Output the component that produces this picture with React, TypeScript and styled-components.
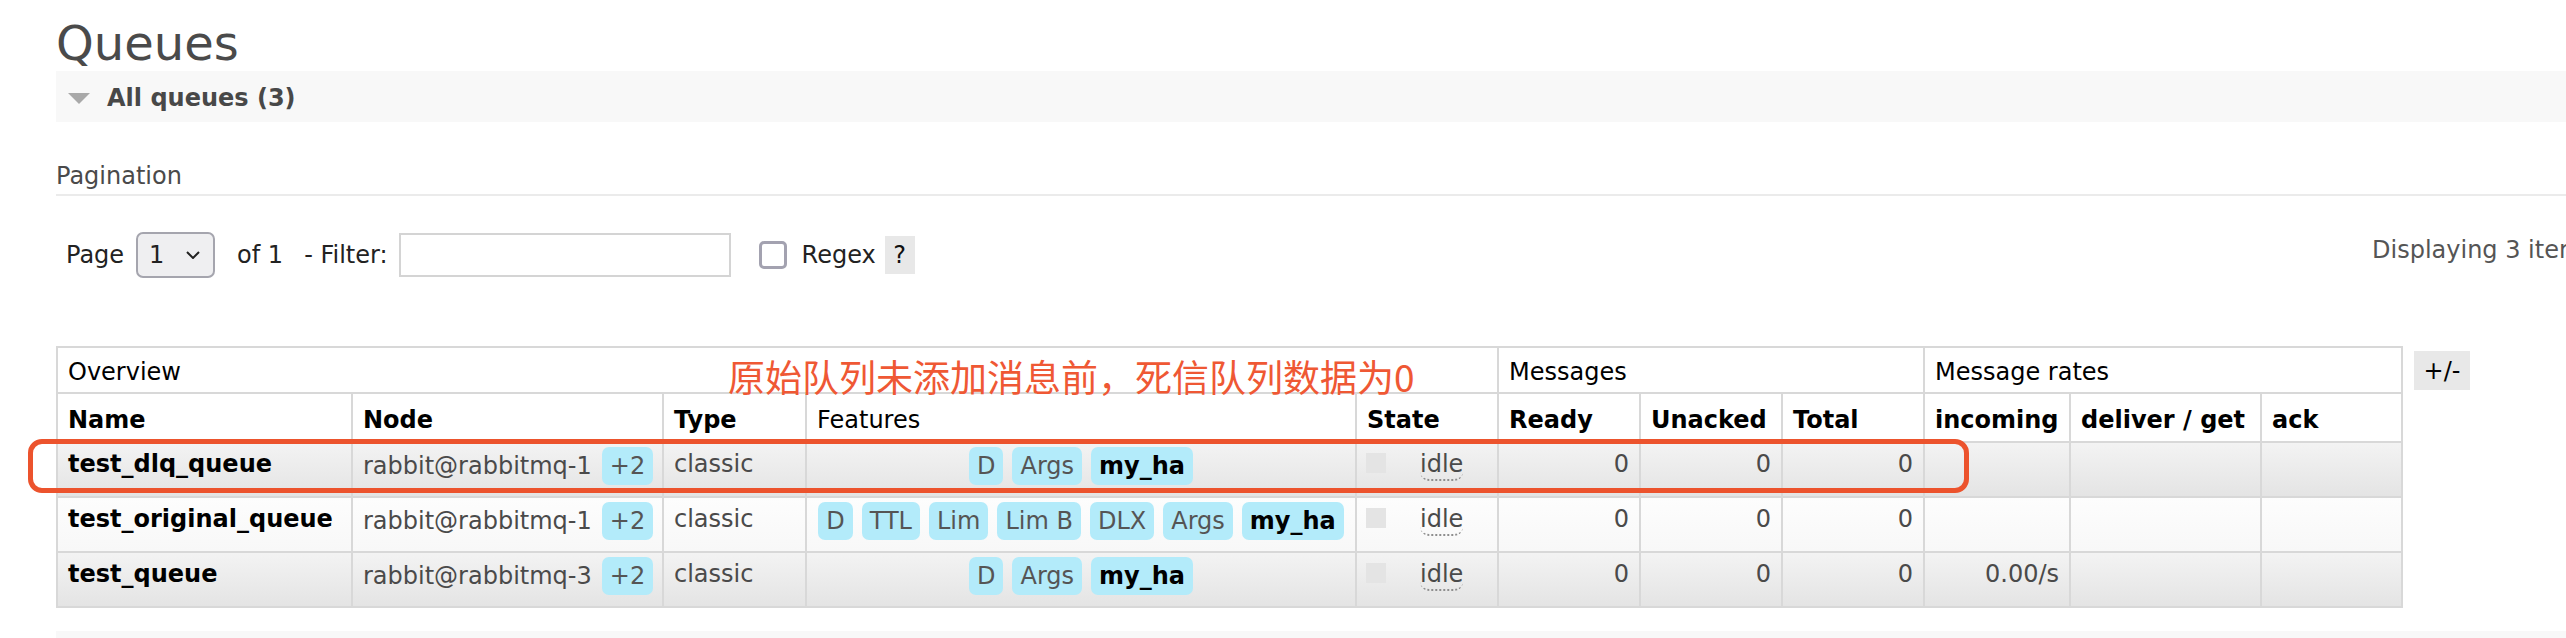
import React from "react";
import styled, { createGlobalStyle } from "styled-components";

const GlobalStyle = createGlobalStyle`
  html, body {
    margin: 0;
    padding: 0;
    background: #fff;
    overflow: hidden;
  }
  body {
    font-family: "DejaVu Sans", Verdana, sans-serif;
    font-size: 24px;
    color: #484848;
  }
`;

const PageWrap = styled.div`
  width: 2566px;
  box-sizing: border-box;
  padding: 15px 0 0 56px;
`;

const Title = styled.h1`
  margin: 0;
  font-size: 48px;
  font-weight: normal;
  color: #4a4a4a;
`;

const SectionBar = styled.div`
  display: flex;
  align-items: center;
  gap: 17px;
  padding: 13px 12px 10px;
  background: #f8f8f8;
  font-weight: bold;
  color: #484848;
`;

const SubHeading = styled.h3`
  margin: 40px 0 0;
  padding-bottom: 4px;
  border-bottom: 2px solid #ebebeb;
  font-size: 24px;
  font-weight: normal;
  color: #4a4a4a;
`;

const PagerRow = styled.div`
  display: flex;
  align-items: flex-start;
  margin-top: 36px;
  padding-left: 10px;
  white-space: nowrap;
`;

const PagerControls = styled.div`
  flex: 0 0 2306px;
  display: flex;
  align-items: center;
  color: #222;
`;

const Label = styled.span<{ $gap?: number }>`
  margin-left: ${(p) => p.$gap ?? 0}px;
`;

const PageSelect = styled.div`
  display: flex;
  align-items: center;
  justify-content: space-between;
  box-sizing: border-box;
  width: 79px;
  height: 46px;
  margin-left: 12px;
  padding: 0 13px 0 11px;
  border: 2px solid #a5a5ae;
  border-radius: 7px;
  background: #efeff1;
  color: #222;
`;

const FilterInput = styled.input`
  box-sizing: border-box;
  width: 332px;
  height: 44px;
  margin-left: 11px;
  border: 2px solid #d4d4d4;
  background: #fff;
  font: inherit;
  outline: none;
`;

const CheckBox = styled.span`
  box-sizing: border-box;
  width: 28px;
  height: 28px;
  margin-left: 28px;
  border: 3px solid #a3a2b0;
  border-radius: 5px;
  background: #fff;
`;

const HelpTag = styled.span`
  display: flex;
  align-items: center;
  justify-content: center;
  width: 30px;
  height: 38px;
  margin-left: 9px;
  background: #e8e8e8;
  color: #111;
`;

const Displaying = styled.span`
  flex-shrink: 0;
  margin-top: 4px;
  color: #555;
`;

const TableArea = styled.div`
  position: relative;
  display: flex;
  align-items: flex-start;
  gap: 11px;
  margin-top: 68px;
`;

const QueueTable = styled.table`
  border-collapse: separate;
  border-spacing: 0;
  table-layout: fixed;
  width: 2347px;
  border-left: 2px solid #d8d8d8;
  border-top: 2px solid #d8d8d8;
`;

const Row = styled.tr<{ $h: number }>`
  height: ${(p) => p.$h}px;
`;

const HeadCell = styled.th<{ $bold?: boolean }>`
  box-sizing: border-box;
  padding: 4px 10px 0;
  border-right: 2px solid #d8d8d8;
  border-bottom: 2px solid #d8d8d8;
  background: #fff;
  color: #000;
  text-align: left;
  vertical-align: middle;
  white-space: nowrap;
  font-weight: ${(p) => (p.$bold ? "bold" : "normal")};
`;

const Cell = styled.td<{ $alt: boolean; $align?: "left" | "right"; $padLeft?: number }>`
  box-sizing: border-box;
  padding: 4px 10px 0 ${(p) => p.$padLeft ?? 10}px;
  border-right: 2px solid #d8d8d8;
  border-bottom: 2px solid #d8d8d8;
  vertical-align: top;
  line-height: 34px;
  white-space: nowrap;
  text-align: ${(p) => p.$align ?? "left"};
  color: #4a4a4a;
  background: ${(p) =>
    p.$alt
      ? "linear-gradient(#f3f3f3, #e4e4e4)"
      : "linear-gradient(#fdfdfd, #f8f8f8)"};
`;

const QueueName = styled.span`
  font-weight: bold;
  color: #000;
`;

const InlineGroup = styled.div<{ $center?: boolean }>`
  display: flex;
  align-items: center;
  justify-content: ${(p) => (p.$center ? "center" : "flex-start")};
  gap: 9px;
`;

const Tag = styled.span<{ $strong?: boolean }>`
  display: inline-block;
  height: 38px;
  line-height: 38px;
  padding: 0 8px;
  border-radius: 7px;
  background: #b3ebfa;
  color: ${(p) => (p.$strong ? "#000" : "#555")};
  font-weight: ${(p) => (p.$strong ? "bold" : "normal")};
`;

const NodeTag = styled(Tag)`
  margin-left: 1px;
`;

const StateBox = styled.div`
  display: flex;
  align-items: flex-start;
  gap: 34px;
`;

const StatusSquare = styled.span`
  width: 20px;
  height: 20px;
  margin-top: 6px;
  background: #e4e4e4;
`;

const Idle = styled.span`
  display: inline-block;
  line-height: 30px;
  margin-top: 2px;
  border-bottom: 2px dotted #8e8e8e;
  border-radius: 0 0 9px 9px;
  color: #4a4a4a;
`;

const ColumnToggle = styled.div`
  display: flex;
  align-items: center;
  justify-content: center;
  width: 56px;
  height: 39px;
  margin-top: 5px;
  background: #e8e8e8;
  color: #000;
`;

const Annotation = styled.div`
  position: absolute;
  left: 672px;
  top: 12px;
  font-family: "Noto Sans CJK SC", "DejaVu Sans", sans-serif;
  font-size: 37px;
  line-height: 1;
  color: #ef5834;
  white-space: nowrap;
`;

const Highlight = styled.div`
  position: absolute;
  left: -28px;
  top: 93px;
  width: 1941px;
  height: 54px;
  box-sizing: border-box;
  border: 5px solid #ec532d;
  border-radius: 14px;
  pointer-events: none;
`;

const BottomBar = styled.div`
  height: 40px;
  margin-top: 23px;
  background: #f8f8f8;
`;

type Feature = { label: string; strong?: boolean };
type Queue = { name: string; node: string; features: Feature[]; incoming: string };

const f = (labels: string[]): Feature[] =>
  labels.map((label) => ({ label, strong: label === "my_ha" }));

const queues: Queue[] = [
  { name: "test_dlq_queue", node: "rabbit@rabbitmq-1", features: f(["D", "Args", "my_ha"]), incoming: "" },
  {
    name: "test_original_queue",
    node: "rabbit@rabbitmq-1",
    features: f(["D", "TTL", "Lim", "Lim B", "DLX", "Args", "my_ha"]),
    incoming: "",
  },
  { name: "test_queue", node: "rabbit@rabbitmq-3", features: f(["D", "Args", "my_ha"]), incoming: "0.00/s" },
];

const colWidths = [295, 311, 143, 550, 142, 142, 142, 142, 146, 191, 141];

const columns: { label: string; bold: boolean }[] = [
  { label: "Name", bold: true },
  { label: "Node", bold: true },
  { label: "Type", bold: true },
  { label: "Features", bold: false },
  { label: "State", bold: true },
  { label: "Ready", bold: true },
  { label: "Unacked", bold: true },
  { label: "Total", bold: true },
  { label: "incoming", bold: true },
  { label: "deliver / get", bold: true },
  { label: "ack", bold: true },
];

const Triangle = () => (
  <svg width="22" height="11" viewBox="0 0 22 11">
    <polygon points="0,0 22,0 11,11" fill="#a9a9a9" />
  </svg>
);

const Chevron = () => (
  <svg width="14" height="8" viewBox="0 0 14 8">
    <polyline points="1,1 7,7 13,1" fill="none" stroke="#222" strokeWidth="2" />
  </svg>
);

const QueueRow = ({ queue, alt }: { queue: Queue; alt: boolean }) => (
  <Row $h={55}>
    <Cell $alt={alt}>
      <QueueName>{queue.name}</QueueName>
    </Cell>
    <Cell $alt={alt}>
      <InlineGroup>
        {queue.node}
        <NodeTag>+2</NodeTag>
      </InlineGroup>
    </Cell>
    <Cell $alt={alt}>classic</Cell>
    <Cell $alt={alt}>
      <InlineGroup $center>
        {queue.features.map((ft) => (
          <Tag key={ft.label} $strong={ft.strong}>
            {ft.label}
          </Tag>
        ))}
      </InlineGroup>
    </Cell>
    <Cell $alt={alt} $padLeft={9}>
      <StateBox>
        <StatusSquare />
        <Idle>idle</Idle>
      </StateBox>
    </Cell>
    <Cell $alt={alt} $align="right">0</Cell>
    <Cell $alt={alt} $align="right">0</Cell>
    <Cell $alt={alt} $align="right">0</Cell>
    <Cell $alt={alt} $align="right">{queue.incoming}</Cell>
    <Cell $alt={alt} />
    <Cell $alt={alt} />
  </Row>
);

export default function App() {
  return (
    <>
      <GlobalStyle />
      <PageWrap>
        <Title>Queues</Title>
        <SectionBar>
          <Triangle />
          All queues (3)
        </SectionBar>
        <SubHeading>Pagination</SubHeading>
        <PagerRow>
          <PagerControls>
            <Label>Page</Label>
            <PageSelect>
              <span>1</span>
              <Chevron />
            </PageSelect>
            <Label $gap={22}>of 1</Label>
            <Label $gap={21}>- Filter:</Label>
            <FilterInput type="text" />
            <CheckBox />
            <Label $gap={15}>Regex</Label>
            <HelpTag>?</HelpTag>
          </PagerControls>
          <Displaying>Displaying 3 items , page size up to:</Displaying>
        </PagerRow>
        <TableArea>
          <QueueTable>
            <colgroup>
              {colWidths.map((w, i) => (
                <col key={i} style={{ width: w }} />
              ))}
            </colgroup>
            <thead>
              <Row $h={46}>
                <HeadCell colSpan={5}>Overview</HeadCell>
                <HeadCell colSpan={3}>Messages</HeadCell>
                <HeadCell colSpan={3}>Message rates</HeadCell>
              </Row>
              <Row $h={49}>
                {columns.map((c) => (
                  <HeadCell key={c.label} $bold={c.bold}>
                    {c.label}
                  </HeadCell>
                ))}
              </Row>
            </thead>
            <tbody>
              {queues.map((q, i) => (
                <QueueRow key={q.name} queue={q} alt={i !== 1} />
              ))}
            </tbody>
          </QueueTable>
          <ColumnToggle>+/-</ColumnToggle>
          <Annotation>原始队列未添加消息前，死信队列数据为0</Annotation>
          <Highlight />
        </TableArea>
        <BottomBar />
      </PageWrap>
    </>
  );
}
